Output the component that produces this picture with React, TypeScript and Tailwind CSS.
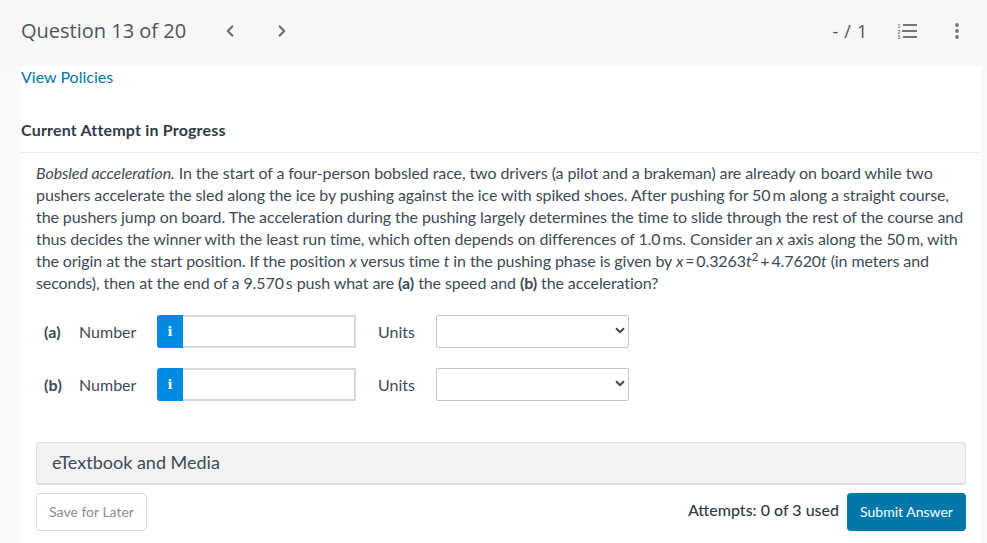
import { ChevronLeft, ChevronRight } from "lucide-react"

function ListIcon() {
  return (
    <svg width="20" height="16" viewBox="0 0 20 16" className="text-[#757575]">
      <text x="0.5" y="4.5" fontSize="5" fontFamily="Liberation Sans, sans-serif" fontWeight="700" fill="currentColor">1</text>
      <text x="0.5" y="10.5" fontSize="5" fontFamily="Liberation Sans, sans-serif" fontWeight="700" fill="currentColor">2</text>
      <text x="0.5" y="15.5" fontSize="5" fontFamily="Liberation Sans, sans-serif" fontWeight="700" fill="currentColor">3</text>
      <path d="M6 1h14v2H6zM5 7h15v2H5zM6 13h14v2H6z" fill="currentColor" />
    </svg>
  )
}

function DotsIcon() {
  return (
    <svg width="4" height="16" viewBox="0 0 4 16" className="text-[#757575]">
      <circle cx="2" cy="2" r="1.9" fill="currentColor" />
      <circle cx="2" cy="8" r="1.9" fill="currentColor" />
      <circle cx="2" cy="14" r="1.9" fill="currentColor" />
    </svg>
  )
}

function AnswerRow({ part }: { part: string }) {
  return (
    <div className="flex items-center h-[33px] pl-2">
      <span className="w-[35px] font-bold tracking-[0.2px] text-[#3d4a57]">({part})</span>
      <span className="w-[78px] text-[#3d4a57]">Number</span>
      <div className="flex w-[199px] h-[33px]">
        <span className="flex w-[26px] items-center justify-center rounded-l-[3px] bg-[#008ae0] font-['DejaVu_Serif',serif] text-[13px] font-bold text-white">
          i
        </span>
        <input className="flex-1 min-w-0 border-2 border-l-0 border-[#d8d8d8] bg-white" />
      </div>
      <span className="ml-[22px] w-[58px] text-[#3d4a57]">Units</span>
      <div className="relative w-[193px] h-[33px] rounded-[2px] border border-[#c4c4c4] bg-white">
        <svg width="10" height="7" viewBox="0 0 10 7" className="absolute right-[3px] top-[11px] text-[#444444]">
          <path d="M1 1.2l4 4 4-4" fill="none" stroke="currentColor" strokeWidth="2" />
        </svg>
      </div>
    </div>
  )
}

export default function App() {
  return (
    <div className="h-[543px] w-[987px] overflow-hidden bg-[#f9f9f9] font-['Lato',sans-serif] text-[16px] leading-[22px] text-[#3d4a57]">
      <header className="flex h-[66px] items-center bg-[#f7f7f7] pb-[4px] pl-[21px]">
        <h1 className="w-[200px] font-['Open_Sans',sans-serif] text-[20px] leading-[28px] text-[#4a5560]">Question 13 of 20</h1>
        <ChevronLeft size={18} strokeWidth={3} className="text-[#6f6f6f]" />
        <ChevronRight size={18} strokeWidth={3} className="ml-[34px] text-[#6f6f6f]" />
        <span className="ml-auto font-['Open_Sans',sans-serif] text-[18px] tracking-[0.7px] text-[#4a5560]">- / 1</span>
        <span className="ml-[29px] flex"><ListIcon /></span>
        <span className="ml-[38px] mr-[28px] flex"><DotsIcon /></span>
      </header>

      <main className="ml-[21px] mr-[6px] h-[477px] bg-white">
        <a className="block text-[#0077a9]">View Policies</a>
        <h2 className="mt-[31px] border-b border-[#ececec] pb-[11px] font-bold tracking-[0.19px] text-[#2f3b47]">Current Attempt in Progress</h2>

        <div className="mx-[15px] mt-[9px]">
          <p className="whitespace-nowrap tracking-[-0.09px]">
            <em>Bobsled acceleration.</em> In the start of a four-person bobsled race, two drivers (a pilot and a brakeman) are already on board while two<br />
            pushers accelerate the sled along the ice by pushing against the ice with spiked shoes. After pushing for 50{"\u2009"}m along a straight course,<br />
            the pushers jump on board. The acceleration during the pushing largely determines the time to slide through the rest of the course and<br />
            thus decides the winner with the least run time, which often depends on differences of 1.0{"\u2009"}ms. Consider an <em>x</em> axis along the 50{"\u2009"}m, with<br />
            the origin at the start position. If the position <em>x</em> versus time <em>t</em> in the pushing phase is given by <em>x</em>{"\u2009"}={"\u2009"}0.3263<em>t</em><sup className="text-[12px] leading-none">2</sup>{"\u2009"}+{"\u2009"}4.7620<em>t</em> (in meters and<br />
            seconds), then at the end of a 9.570{"\u2009"}s push what are <strong>(a)</strong> the speed and <strong>(b)</strong> the acceleration?
          </p>

          <div className="mt-[21px] flex flex-col gap-[20px]">
            <AnswerRow part="a" />
            <AnswerRow part="b" />
          </div>

          <div className="mt-[41px] flex h-[43px] items-center rounded-[3px] border border-b-2 border-[#e0e0e0] bg-[#f3f3f3] px-[15px] pb-[2px] text-[18px] text-[#3d4a57]">
            eTextbook and Media
          </div>

          <div className="mt-[8px] flex items-start">
            <button className="h-[38px] w-[111px] rounded-[4px] border border-[#dcdcdc] bg-white text-[14px] text-[#8c8c8c]">Save for Later</button>
            <span className="ml-auto mt-[6px] font-medium text-[#2f3b47]">Attempts: 0 of 3 used</span>
            <button className="ml-[8px] h-[38px] w-[119px] rounded-[4px] bg-[#0077a9] text-[14px] text-white">Submit Answer</button>
          </div>
        </div>
      </main>
    </div>
  )
}
